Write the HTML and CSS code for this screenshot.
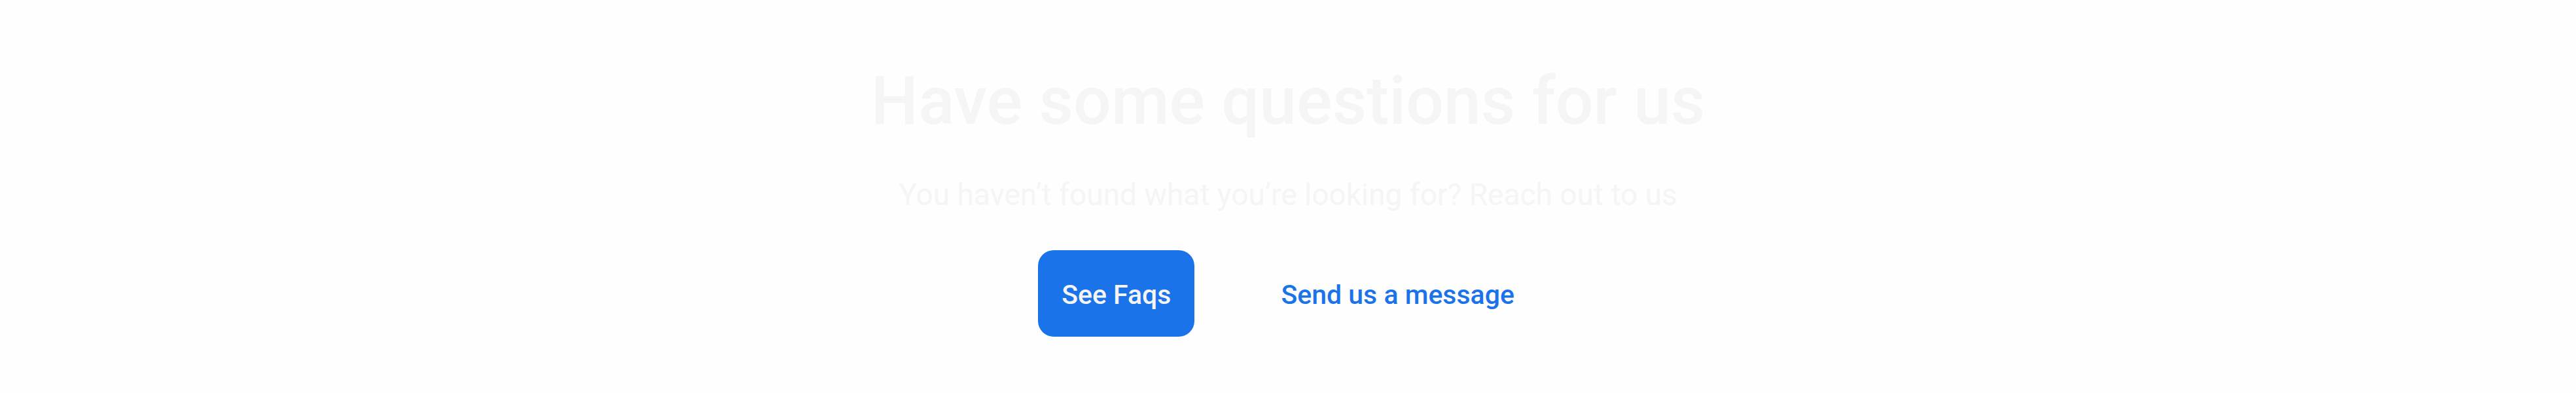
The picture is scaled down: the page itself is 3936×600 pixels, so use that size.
FILE: index.html
```html
<!DOCTYPE html>
<html lang="en">
<head>
<meta charset="utf-8">
<meta name="viewport" content="width=device-width, initial-scale=1">
<title>Have some questions for us</title>
<link rel="stylesheet" href="styles.css">
</head>
<body>
<section class="contact">
  <h2 class="contact-title">Have some questions for us</h2>
  <p class="contact-text">You haven’t found what you’re looking for? Reach out to us</p>
  <div class="contact-actions">
    <button type="button" class="button button-primary">See Faqs</button>
    <button type="button" class="button button-link">Send us a message</button>
  </div>
</section>
</body>
</html>
```
FILE: styles.css
```css
* {
  box-sizing: border-box;
}

body {
  margin: 0;
  background: #fefefe;
  color: #f5f5f5;
  font-family: Roboto, "Liberation Sans", sans-serif;
}

.contact {
  display: flex;
  flex-direction: column;
  align-items: center;
  padding: 90px 48px 84px;
  text-align: center;
}

.contact-title {
  margin: 0 0 44px;
  font-size: 102px;
  font-weight: 500;
  line-height: 128px;
}

.contact-text {
  margin: 0 0 50px;
  font-size: 46px;
  font-weight: 400;
  line-height: 70px;
}

.contact-actions {
  display: flex;
  flex-wrap: wrap;
  justify-content: center;
  gap: 96px;
}

.button {
  padding: 38px 36px 34px;
  border: 0;
  border-radius: 24px;
  background: transparent;
  font-family: inherit;
  font-size: 41px;
  font-weight: 500;
  line-height: 60px;
  cursor: pointer;
}

.button-primary {
  background: #1a73e8;
  color: #f5f5f5;
}

.button-link {
  color: #1a73e8;
}
```
